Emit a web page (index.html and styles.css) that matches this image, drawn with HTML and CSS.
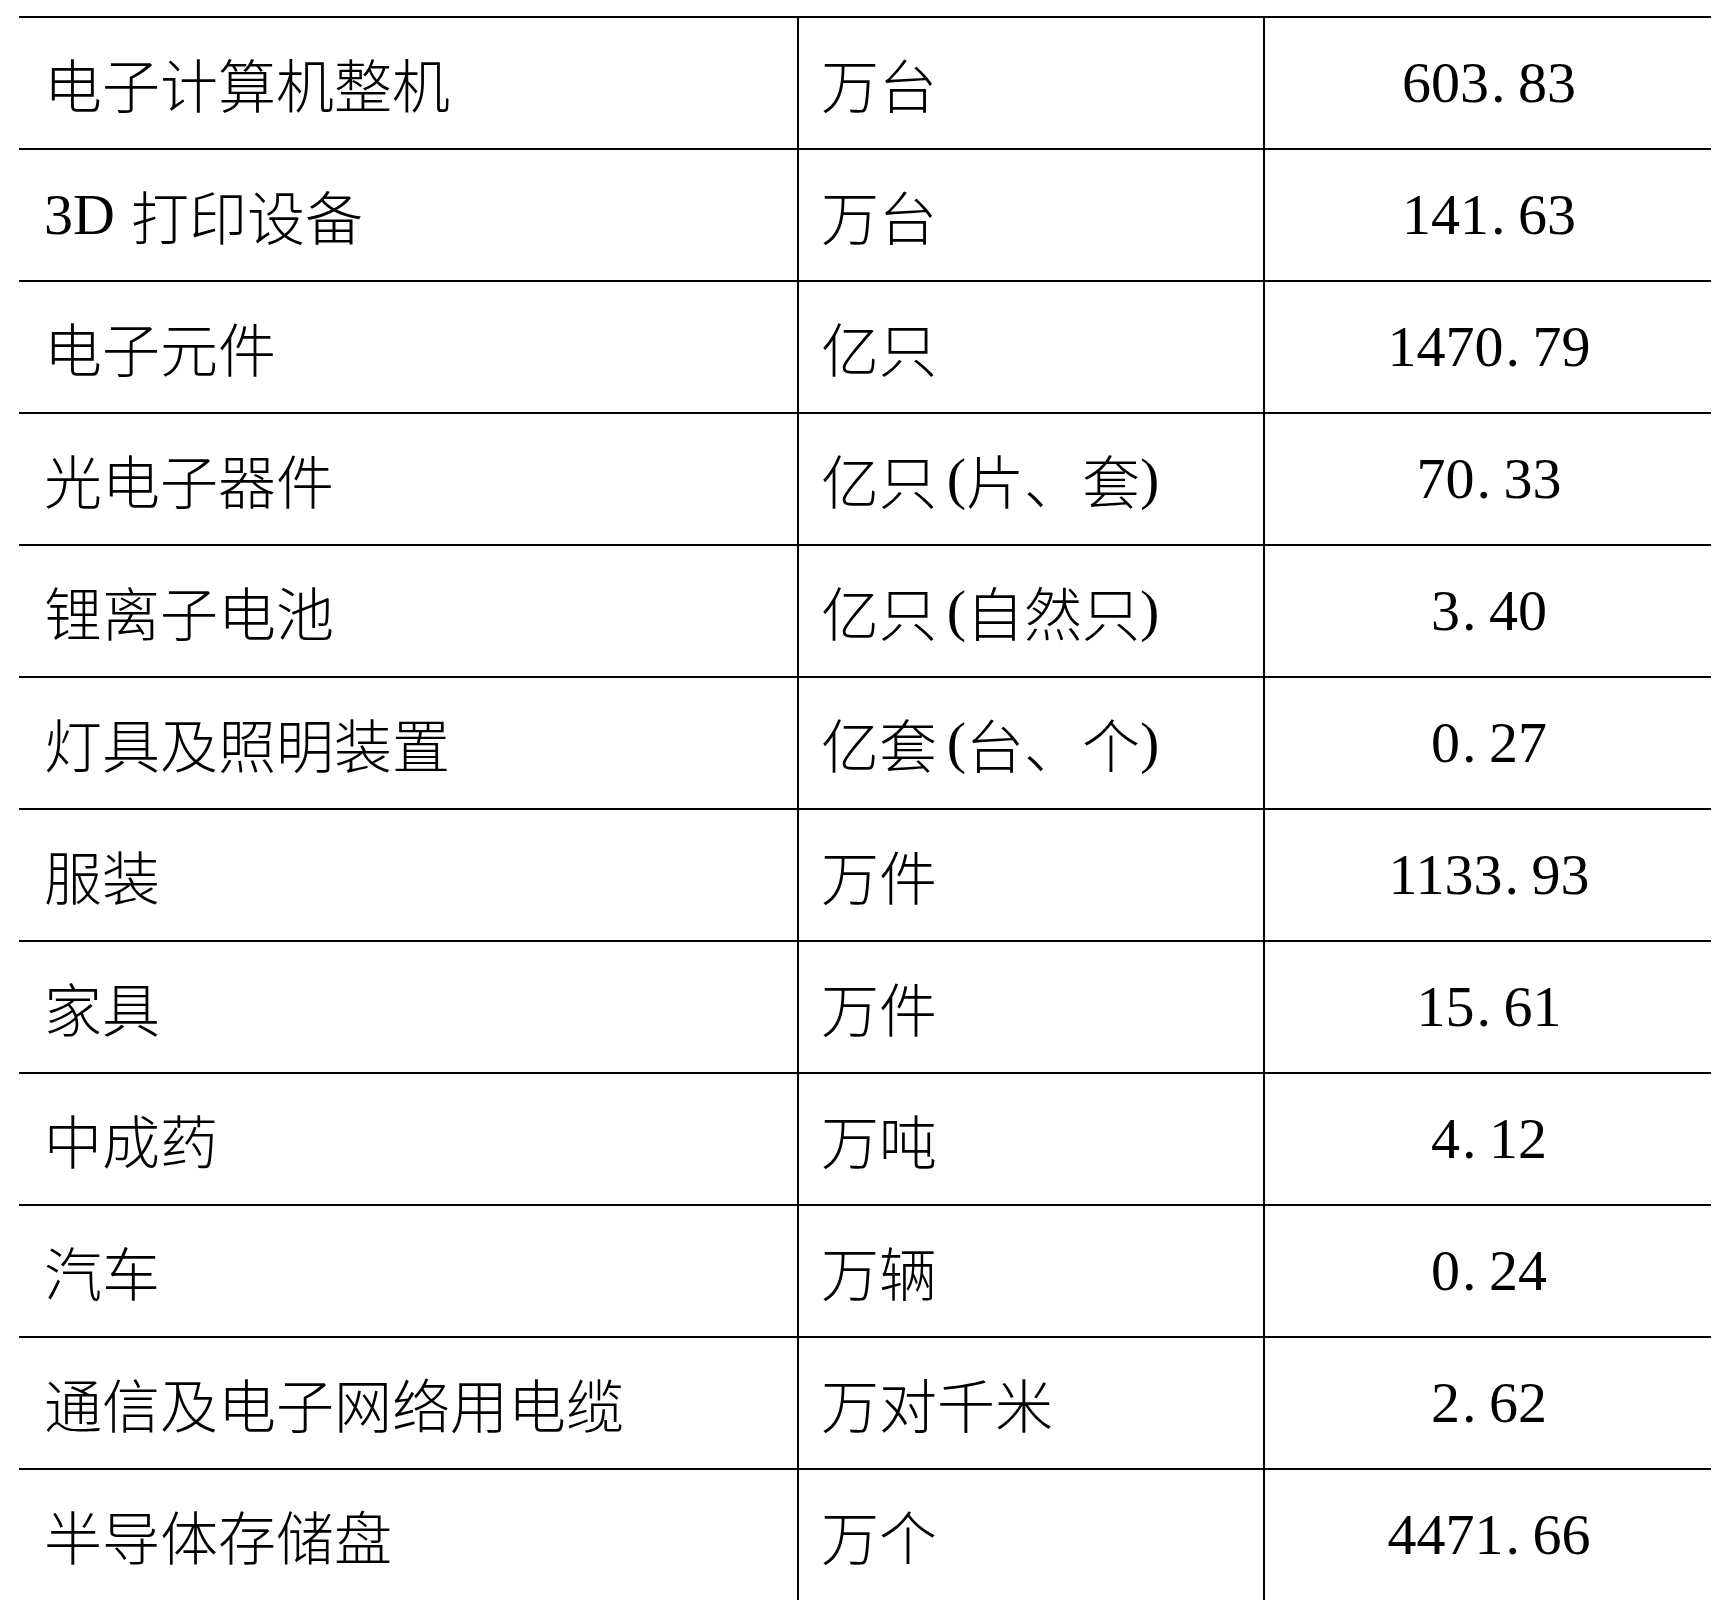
FILE: index.html
```html
<!DOCTYPE html>
<html lang="zh-CN">
<head>
<meta charset="utf-8">
<title>产品产量表</title>
<link rel="stylesheet" href="styles.css">
</head>
<body>
<div class="sheet">
  <div class="row">
    <div class="cell name">电子计算机整机</div>
    <div class="cell unit">万台</div>
    <div class="cell val">603<span class="pt">.</span>83</div>
  </div>
  <div class="row">
    <div class="cell name"><span class="lat">3D</span>打印设备</div>
    <div class="cell unit">万台</div>
    <div class="cell val">141<span class="pt">.</span>63</div>
  </div>
  <div class="row">
    <div class="cell name">电子元件</div>
    <div class="cell unit">亿只</div>
    <div class="cell val">1470<span class="pt">.</span>79</div>
  </div>
  <div class="row">
    <div class="cell name">光电子器件</div>
    <div class="cell unit">亿只<span class="hw hl">(</span>片、套<span class="hw hr">)</span></div>
    <div class="cell val">70<span class="pt">.</span>33</div>
  </div>
  <div class="row">
    <div class="cell name">锂离子电池</div>
    <div class="cell unit">亿只<span class="hw hl">(</span>自然只<span class="hw hr">)</span></div>
    <div class="cell val">3<span class="pt">.</span>40</div>
  </div>
  <div class="row">
    <div class="cell name">灯具及照明装置</div>
    <div class="cell unit">亿套<span class="hw hl">(</span>台、个<span class="hw hr">)</span></div>
    <div class="cell val">0<span class="pt">.</span>27</div>
  </div>
  <div class="row">
    <div class="cell name">服装</div>
    <div class="cell unit">万件</div>
    <div class="cell val">1133<span class="pt">.</span>93</div>
  </div>
  <div class="row">
    <div class="cell name">家具</div>
    <div class="cell unit">万件</div>
    <div class="cell val">15<span class="pt">.</span>61</div>
  </div>
  <div class="row">
    <div class="cell name">中成药</div>
    <div class="cell unit">万吨</div>
    <div class="cell val">4<span class="pt">.</span>12</div>
  </div>
  <div class="row">
    <div class="cell name">汽车</div>
    <div class="cell unit">万辆</div>
    <div class="cell val">0<span class="pt">.</span>24</div>
  </div>
  <div class="row">
    <div class="cell name">通信及电子网络用电缆</div>
    <div class="cell unit">万对千米</div>
    <div class="cell val">2<span class="pt">.</span>62</div>
  </div>
  <div class="row">
    <div class="cell name">半导体存储盘</div>
    <div class="cell unit">万个</div>
    <div class="cell val">4471<span class="pt">.</span>66</div>
  </div>
</div>
</body>
</html>
```

FILE: styles.css
```css
html, body {
  margin: 0;
  padding: 0;
  background: #ffffff;
}

body {
  color: #000000;
  font-family: "Noto Sans CJK SC", "Liberation Serif", sans-serif;
  font-size: 58px;
  font-weight: 300;
  overflow: hidden;
}

.sheet {
  margin: 16px 0 0 19px;
  width: 1692px;
}

.row {
  display: grid;
  grid-template-columns: 778px 466px 448px;
  height: 132px;
}

.cell {
  display: flex;
  align-items: center;
  border-top: 2px solid #000000;
  line-height: 1;
  white-space: nowrap;
}

.name {
  padding-left: 25px;
}

.unit {
  border-left: 2px solid #000000;
  padding-left: 22px;
}

.val {
  border-left: 2px solid #000000;
  justify-content: center;
  font-family: "Liberation Serif", serif;
  font-weight: 400;
  padding-left: 2px;
}

.pt {
  display: inline-block;
  width: 0.5em;
  text-align: left;
  padding-left: 2px;
  box-sizing: border-box;
}

.lat {
  font-family: "Liberation Serif", serif;
  font-weight: 400;
  margin-right: 16px;
}

.hw {
  display: inline-block;
  width: 0.5em;
  font-family: "Liberation Serif", serif;
  font-weight: 400;
}

.hl {
  text-align: right;
}

.hr {
  text-align: left;
}
```
